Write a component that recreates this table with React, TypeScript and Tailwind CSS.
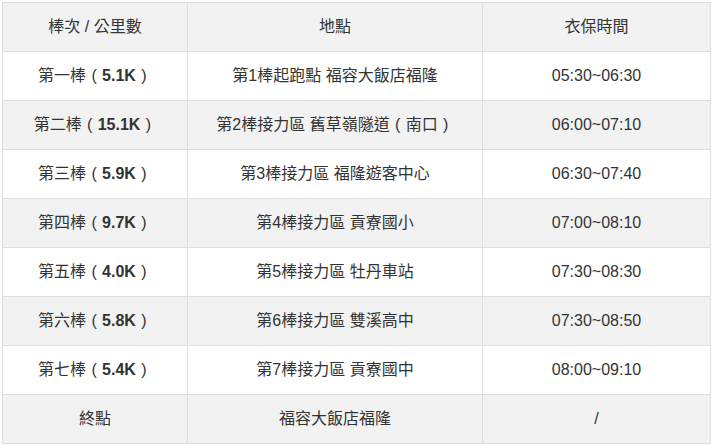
import React from "react";

const rows: [string, string | null, React.ReactNode, string][] = [];

function P({ c }: { c: string }) {
  return <span className="inline-block w-[1em] text-center">{c}</span>;
}

const data: [string, string | null, React.ReactNode, string][] = [
  ["第一棒", "5.1K", "第1棒起跑點 福容大飯店福隆", "05:30~06:30"],
  [
    "第二棒",
    "15.1K",
    <>
      第2棒接力區 舊草嶺隧道<P c="(" />南口<P c=")" />
    </>,
    "06:00~07:10",
  ],
  ["第三棒", "5.9K", "第3棒接力區 福隆遊客中心", "06:30~07:40"],
  ["第四棒", "9.7K", "第4棒接力區 貢寮國小", "07:00~08:10"],
  ["第五棒", "4.0K", "第5棒接力區 牡丹車站", "07:30~08:30"],
  ["第六棒", "5.8K", "第6棒接力區 雙溪高中", "07:30~08:50"],
  ["第七棒", "5.4K", "第7棒接力區 貢寮國中", "08:00~09:10"],
  ["終點", null, "福容大飯店福隆", "/"],
];

export default function App() {
  void rows;
  return (
    <div
      className="w-[711px] h-[445px] bg-white p-[2px] text-[#333] text-[16px]"
      style={{ fontFamily: '"Liberation Sans", Arial, "Noto Sans CJK TC", sans-serif' }}
    >
      <table className="w-[708px] border-collapse table-fixed">
        <colgroup>
          <col className="w-[185px]" />
          <col className="w-[295px]" />
          <col className="w-[228px]" />
        </colgroup>
        <thead>
          <tr className="bg-[#f2f2f2] h-[49px]">
            <th className="border border-[#dedede] font-normal text-center">棒次 / 公里數</th>
            <th className="border border-[#dedede] font-normal text-center">地點</th>
            <th className="border border-[#dedede] font-normal text-center">衣保時間</th>
          </tr>
        </thead>
        <tbody>
          {data.map((r, i) => (
            <tr key={i} className={`h-[49px] ${i % 2 === 1 ? "bg-[#f2f2f2]" : "bg-white"}`}>
              <td className="border border-[#dedede] text-center">
                {r[0]}
                {r[1] && (
                  <>
                    <P c="(" />
                    <b className="font-bold">{r[1]}</b>
                    <P c=")" />
                  </>
                )}
              </td>
              <td className="border border-[#dedede] text-center">{r[2]}</td>
              <td className="border border-[#dedede] text-center">{r[3]}</td>
            </tr>
          ))}
        </tbody>
      </table>
    </div>
  );
}
